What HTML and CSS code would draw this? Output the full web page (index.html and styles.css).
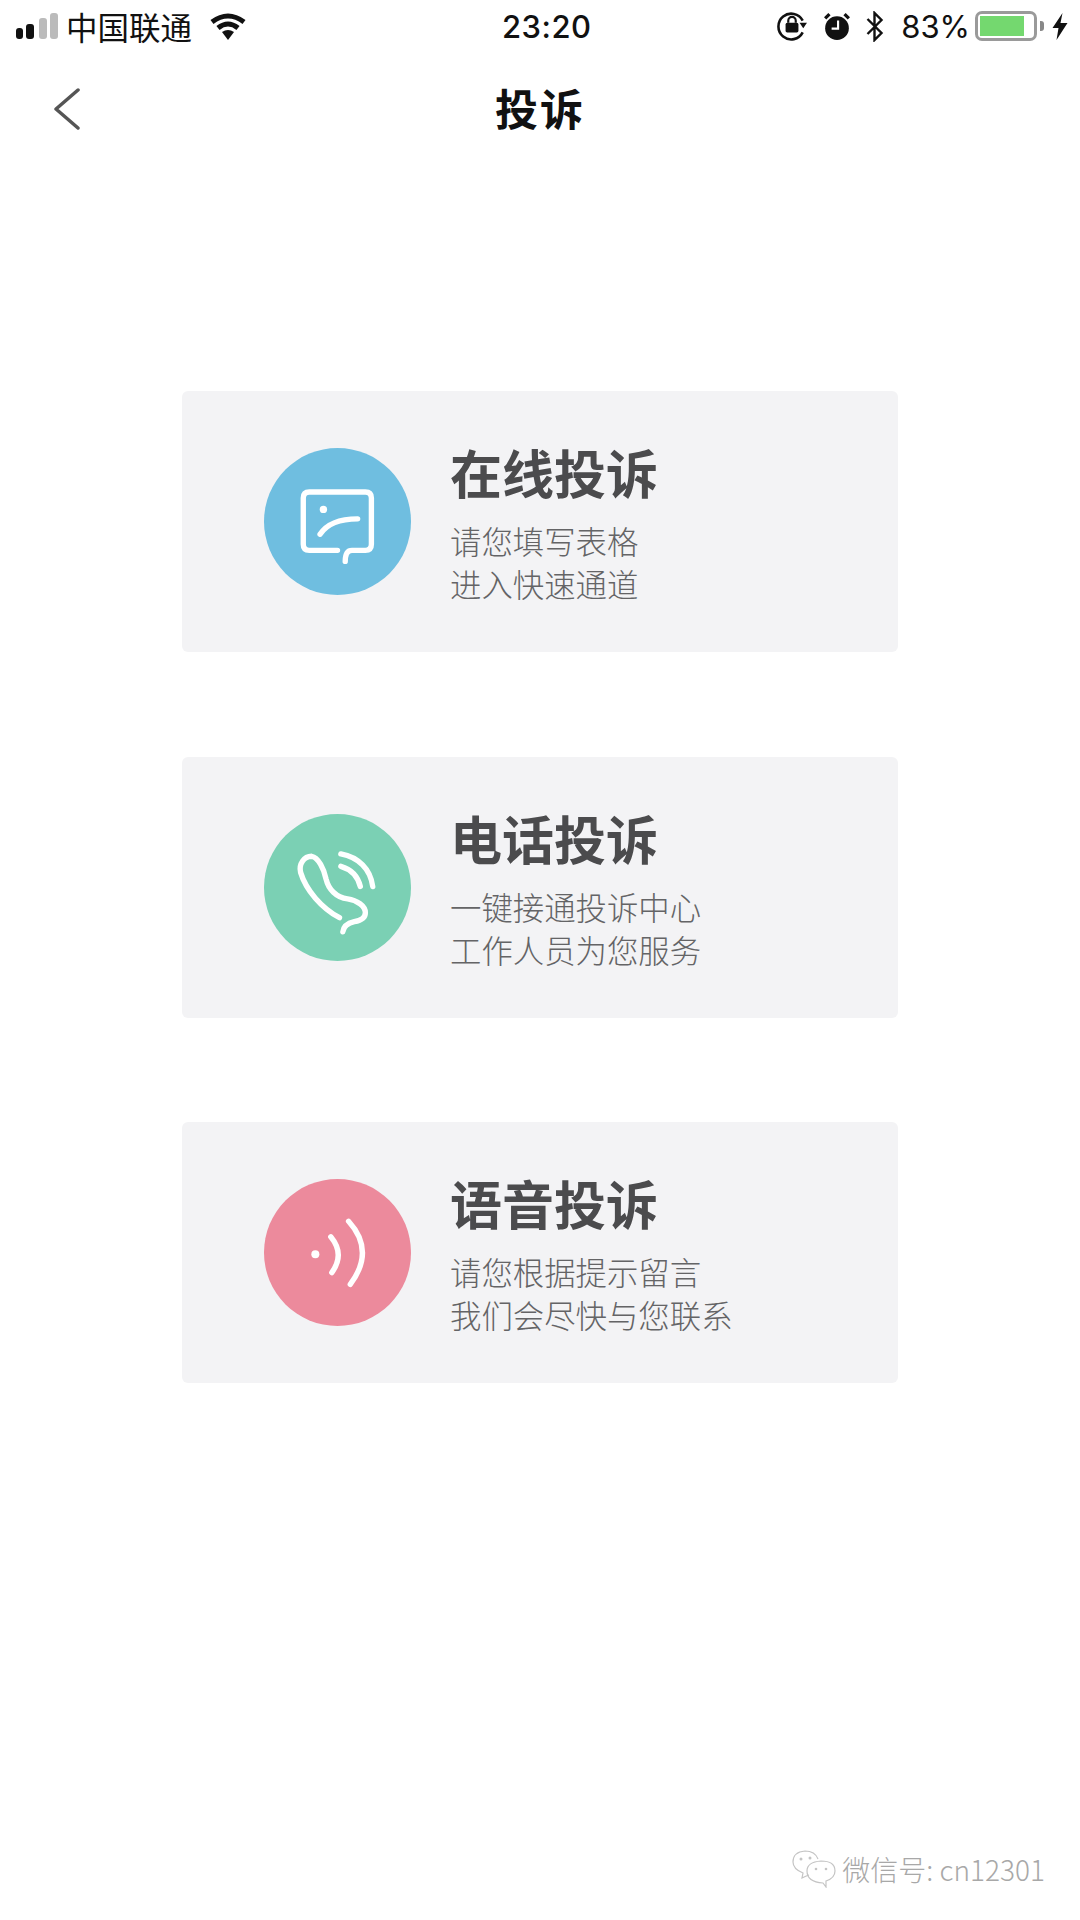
FILE: index.html
```html
<!DOCTYPE HTML>
<html lang="zh-CN">
  <head>
    <title>投诉</title>
    <meta charset="utf-8">
    <link rel="stylesheet" href="styles.css">
  </head>
  <body>

  <div class="phone">

    <div class="status">
      <div class="status-left">
        <svg class="signal" width="42" height="26" viewBox="16 14 42 26">
          <rect x="16" y="29" width="7" height="11" rx="3" fill="#111"/>
          <rect x="26" y="25" width="8" height="15" rx="3" fill="#111"/>
          <rect x="39" y="19" width="8" height="21" rx="3" fill="#bbb"/>
          <rect x="50" y="14" width="8" height="26" rx="3" fill="#bbb"/>
        </svg>
        <span class="carrier">中国联通</span>
        <svg class="wifi" width="36" height="27" viewBox="0 0 36 27">
          <path d="M2 9 Q18 -3 34 9" fill="none" stroke="#111" stroke-width="5"/>
          <path d="M8 15 Q18 7 28 15" fill="none" stroke="#111" stroke-width="5"/>
          <path d="M12 19 Q18 15 24 19 L18 27 Z" fill="#111"/>
        </svg>
      </div>
      <div class="time">23:20</div>
      <div class="status-right">
        <svg width="30" height="30" viewBox="0 0 28 28">
          <path d="M24 9 A12 12 0 1 0 24 20" fill="none" stroke="#111" stroke-width="2.4"/>
          <path d="M21 11 H28 L24.500 16 Z" fill="#111"/>
          <rect x="8" y="11" width="12" height="9" rx="1.500" fill="#111"/>
          <path d="M10.500 11 V9 a3.500 3.500 0 0 1 7 0 V11" fill="none" stroke="#111" stroke-width="2"/>
        </svg>
        <svg class="alarm" width="26" height="28" viewBox="0 0 24 26">
          <circle cx="12" cy="15" r="11" fill="#111"/>
          <path d="M1 6 L5 2 M23 6 L19 2" stroke="#111" stroke-width="3"/>
          <path d="M13 8 V15.500 H7" fill="none" stroke="#fff" stroke-width="2"/>
        </svg>
        <svg class="bt" width="19" height="31" viewBox="0 0 18 31">
          <path d="M2 8 L16 22 L9 29 V2 L16 9 L2 23" fill="none" stroke="#111" stroke-width="2.4"/>
        </svg>
        <span class="pct">83%</span>
        <div class="battery"><div class="battery-fill"></div></div>
        <div class="battery-nub"></div>
        <svg class="bolt" width="16" height="27" viewBox="0 0 15 27">
          <path d="M10 0 L0 15 H6 L4 27 L15 10 H8 Z" fill="#111"/>
        </svg>
      </div>
    </div>

    <div class="nav">
      <svg class="back" width="26" height="42" viewBox="0 0 26 42">
        <path d="M24 2 L2 21 L24 40" fill="none" stroke="#555" stroke-width="3.500" stroke-linecap="round" stroke-linejoin="round"/>
      </svg>
      <div class="nav-title">投诉</div>
    </div>

    <div class="list">

      <div class="card">
        <svg class="badge" viewBox="43 27 438 438">
          <circle cx="262" cy="246" r="219" fill="#6fbee0"/>
          <g fill="none" stroke="#fff" stroke-width="16" stroke-linecap="round">
            <path d="M262 332 H178 Q160 332 160 314 V176 Q160 158 178 158 H345 Q363 158 363 176 V314 Q363 332 345 332 H305 Q285 332 285 365"/>
            <path d="M210 284 Q240 238 322 238"/>
          </g>
          <circle cx="220" cy="210" r="11" fill="#fff"/>
        </svg>
        <div class="card-text">
          <div class="card-title">在线投诉</div>
          <div class="card-sub">请您填写表格<br>进入快速通道</div>
        </div>
      </div>

      <div class="card">
        <svg class="badge" viewBox="43 41 438 438">
          <circle cx="262" cy="260" r="219" fill="#7bd0b4"/>
          <g fill="none" stroke="#fff" stroke-width="16" stroke-linecap="round">
            <path d="M268 350 C215 322 168 268 152 215 C146 190 162 167 185 167 C205 170 222 205 228 235 C235 265 258 290 292 294 C320 298 345 315 345 335 C345 350 332 358 312 362 C295 366 280 375 278 392"/>
            <path d="M272 160 C325 170 360 205 367 257"/>
            <path d="M272 197 C300 205 322 225 330 257"/>
          </g>
        </svg>
        <div class="card-text">
          <div class="card-title">电话投诉</div>
          <div class="card-sub">一键接通投诉中心<br>工作人员为您服务</div>
        </div>
      </div>

      <div class="card">
        <svg class="badge" viewBox="43 41 438 438">
          <circle cx="262" cy="260" r="219" fill="#ec8a9c"/>
          <circle cx="196" cy="265" r="12" fill="#fff"/>
          <g fill="none" stroke="#fff" stroke-width="16" stroke-linecap="round">
            <path d="M242 213 Q285 265 245 320"/>
            <path d="M295 167 Q375 255 300 355"/>
          </g>
        </svg>
        <div class="card-text">
          <div class="card-title">语音投诉</div>
          <div class="card-sub">请您根据提示留言<br>我们会尽快与您联系</div>
        </div>
      </div>

    </div>

    <div class="mark">
      <svg width="44" height="38" viewBox="0 0 44 38">
        <g fill="none" stroke="#c4c4c4" stroke-width="1.200">
          <path d="M17 25 Q14 26 10 28 L11 23 Q1 19 1 12 Q1 2 13 1 Q23 1 26 9"/>
          <path d="M31 33 L34 37 L34 31 Q43 28 43 21 Q43 11 29 11 Q15 12 15 21 Q15 32 31 33 Z"/>
        </g>
        <g fill="#c4c4c4">
          <circle cx="9" cy="9" r="1.500"/>
          <circle cx="18" cy="8" r="1.500"/>
          <circle cx="24" cy="19" r="1.300"/>
          <circle cx="34" cy="19" r="1.300"/>
        </g>
      </svg>
      <span class="mark-text">微信号: cn12301</span>
    </div>

  </div>

  </body>
</html>
```

FILE: styles.css
```css
html, body {
  margin: 0;
  padding: 0;
  background: #fff;
}

body {
  font-family: "Noto Sans CJK SC", "Liberation Sans", sans-serif;
  color: #111;
}

.phone {
  width: 1080px;
  height: 1920px;
  display: flex;
  flex-direction: column;
  overflow: hidden;
}

/* status bar */
.status {
  height: 52px;
  margin-bottom: 2px;
  display: grid;
  grid-template-columns: 486px auto 1fr;
  align-items: center;
  padding: 0 12px 0 16px;
}

.status-left, .status-right {
  display: flex;
  align-items: center;
}

.status-right {
  justify-content: flex-end;
}

.carrier {
  font-size: 31.5px;
  line-height: 40px;
  margin-left: 8px;
}

.wifi {
  margin-left: 18px;
}

.time {
  font: 500 31px Inter, sans-serif;
  letter-spacing: 0.5px;
}

.alarm {
  margin-left: 17px;
}

.bt {
  margin-left: 15px;
}

.pct {
  font: 400 31px Inter, sans-serif;
  margin-left: 17px;
}

.battery {
  width: 56px;
  height: 24px;
  margin-left: 5px;
  padding: 0;
  border: 3px solid #9a9a9a;
  border-radius: 7px;
  display: flex;
  align-items: center;
}

.battery-fill {
  width: 44px;
  height: 20px;
  margin-left: 2px;
  background: #74d86f;
}

.battery-nub {
  width: 4px;
  height: 10px;
  margin-left: 3px;
  background: #888;
  border-radius: 0 3px 3px 0;
}

.bolt {
  margin-left: 8px;
}

/* nav */
.nav {
  height: 110px;
  display: flex;
  align-items: center;
  padding-left: 54px;
}

.nav-title {
  margin: -4px 0 0 415px;
  font-size: 43px;
  font-weight: 700;
  letter-spacing: 2px;
}

/* cards */
.list {
  display: flex;
  flex-direction: column;
  gap: 104.5px;
  padding: 227px 0 0 182px;
}

.card {
  width: 716px;
  height: 261px;
  box-sizing: border-box;
  padding-left: 82px;
  display: flex;
  align-items: center;
  background: #f3f3f5;
  border-radius: 6px;
}

.badge {
  width: 147px;
  height: 147px;
  flex: none;
}

.card-text {
  align-self: flex-start;
  margin-left: 39px;
  padding-top: 51px;
}

.card-title {
  font-size: 52px;
  line-height: 60px;
  font-weight: 700;
  color: #4b4b4d;
  margin-bottom: 17px;
}

.card-sub {
  font-size: 31.4px;
  line-height: 43px;
  font-weight: 300;
  color: #646466;
}

/* watermark */
.mark {
  margin-top: auto;
  display: flex;
  align-items: center;
  justify-content: flex-end;
  gap: 6px;
  padding: 0 35px 32px 0;
}

.mark-text {
  font-size: 28px;
  line-height: 38px;
  font-weight: 300;
  color: #a8a8a8;
  text-shadow: 1px 1px 0 #fff;
}
```
